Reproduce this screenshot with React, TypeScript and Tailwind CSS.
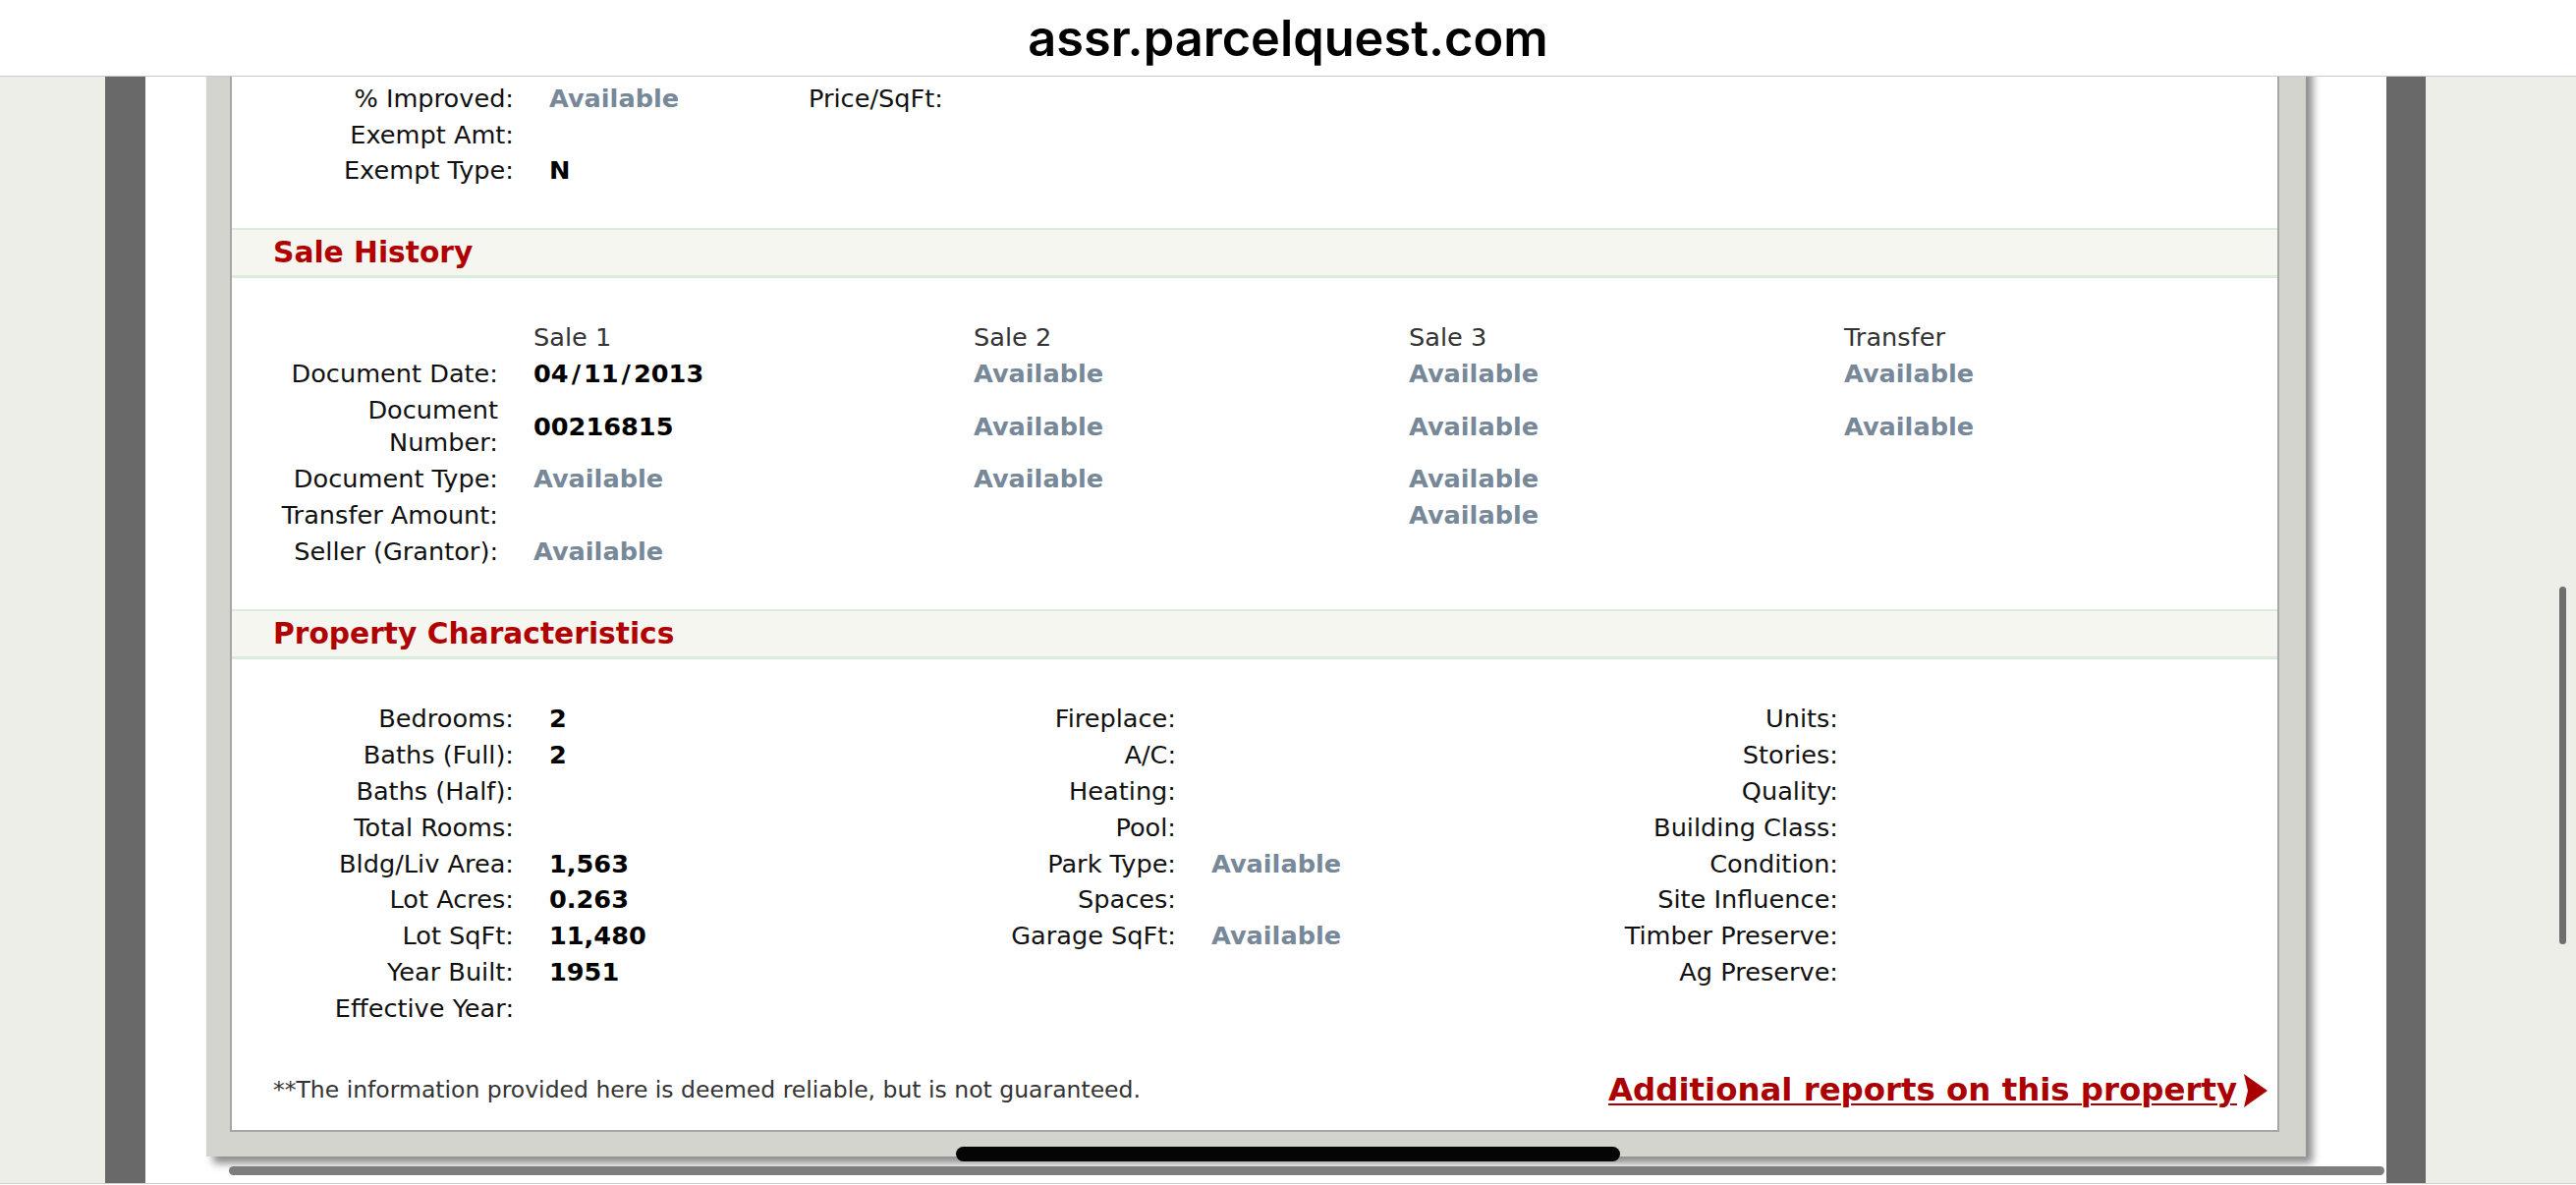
import React from "react";

const FONT = "font-['DejaVu_Sans','Verdana',sans-serif]";

function Avail() {
  return <span className="font-bold text-[#778899]">Available</span>;
}

function Val({ v }: { v?: string }) {
  if (!v) return null;
  if (v === "A") return <Avail />;
  // verdana slashes are much wider than dejavu's
  if (v.includes("/")) {
    const parts = v.split("/");
    return (
      <span className="font-bold text-black">
        {parts.map((p, i) => (
          <React.Fragment key={i}>
            {i > 0 && <span className="px-[3px]">/</span>}
            {p}
          </React.Fragment>
        ))}
      </span>
    );
  }
  return <span className="font-bold text-black">{v}</span>;
}

function Band({ title }: { title: string }) {
  return (
    <div className="flex h-[51px] items-center border-t-2 border-b-[3px] border-[#dcecdc] bg-[#f6f6f0] pl-[42px]">
      <span className="text-[29.7px] font-bold text-[#b00000]">{title}</span>
    </div>
  );
}

const saleRows: { label: string; cells: string[]; tall?: boolean }[] = [
  { label: "Document Date:", cells: ["04/11/2013", "A", "A", "A"] },
  { label: "Document Number:", cells: ["00216815", "A", "A", "A"], tall: true },
  { label: "Document Type:", cells: ["A", "A", "A", ""] },
  { label: "Transfer Amount:", cells: ["", "", "A", ""] },
  { label: "Seller (Grantor):", cells: ["A", "", "", ""] },
];

const saleCols = ["w-[448px]", "w-[443px]", "w-[443px]", "w-[300px]"];

const propCols: [string, string?][][] = [
  [
    ["Bedrooms:", "2"],
    ["Baths (Full):", "2"],
    ["Baths (Half):"],
    ["Total Rooms:"],
    ["Bldg/Liv Area:", "1,563"],
    ["Lot Acres:", "0.263"],
    ["Lot SqFt:", "11,480"],
    ["Year Built:", "1951"],
    ["Effective Year:"],
  ],
  [
    ["Fireplace:"],
    ["A/C:"],
    ["Heating:"],
    ["Pool:"],
    ["Park Type:", "A"],
    ["Spaces:"],
    ["Garage SqFt:", "A"],
  ],
  [
    ["Units:"],
    ["Stories:"],
    ["Quality:"],
    ["Building Class:"],
    ["Condition:"],
    ["Site Influence:"],
    ["Timber Preserve:"],
    ["Ag Preserve:"],
  ],
];

function PropRow({ label, value }: { label: string; value?: string }) {
  return (
    <div className="flex h-[36.8px] items-center">
      <div className="w-[287px] text-right text-[#111]">{label}</div>
      <div className="ml-[36px] w-[351px]">
        <Val v={value} />
      </div>
    </div>
  );
}

export default function App() {
  return (
    <div className="relative h-[1206px] w-[2622px] overflow-hidden bg-white">
      {/* browser address bar */}
      <div className="flex h-[78px] items-center justify-center border-b border-[#cacaca] bg-white">
        <span className="font-['Inter',sans-serif] text-[50.5px] font-semibold text-black">assr.parcelquest.com</span>
      </div>

      <div className="flex h-[1127px] border-b border-[#cfcfcf]">
        <div className="w-[107px] bg-[#eeeee9]" />
        <div className="w-[41px] bg-[#696969]" />

        {/* page area */}
        <div className="w-[2281px] overflow-hidden bg-white">
          <div className="ml-[62px] -mt-[40px] w-[2137px] bg-[#d4d4cf] pl-[24px] pr-[27px] pb-[25px] shadow-[7px_7px_8px_rgba(0,0,0,0.45)]">
            <div className={`border-2 border-[#a6a6a6] bg-white pt-[42px] pb-[20px] text-[25.6px] leading-[33px] ${FONT}`}>
              {/* value summary (tail) */}
              <div className="flex h-[36.8px] items-center">
                <div className="w-[287px] text-right text-[#111]">% Improved:</div>
                <div className="ml-[36px] w-[264px]">
                  <Avail />
                </div>
                <div className="text-[#111]">Price/SqFt:</div>
              </div>
              <PropRow label="Exempt Amt:" />
              <PropRow label="Exempt Type:" value="N" />

              <div className="mt-[39.5px]">
                <Band title="Sale History" />
              </div>

              <div className="mt-[42.6px]">
                <div className="flex h-[36.8px] items-center text-[#333]">
                  <div className="ml-[41px] w-[230px]" />
                  <div className="ml-[36px] flex">
                    {["Sale 1", "Sale 2", "Sale 3", "Transfer"].map((h, i) => (
                      <div key={h} className={saleCols[i]}>
                        {h}
                      </div>
                    ))}
                  </div>
                </div>
                {saleRows.map((r) => (
                  <div key={r.label} className={`flex items-center ${r.tall ? "h-[70px]" : "h-[36.8px]"}`}>
                    <div className="ml-[41px] w-[230px] text-right text-[#111]">{r.label}</div>
                    <div className="ml-[36px] flex">
                      {r.cells.map((c, i) => (
                        <div key={i} className={saleCols[i]}>
                          <Val v={c} />
                        </div>
                      ))}
                    </div>
                  </div>
                ))}
              </div>

              <div className="mt-[40.4px]">
                <Band title="Property Characteristics" />
              </div>

              <div className="mt-[42.6px] grid grid-cols-[674px_674px_674px]">
                {propCols.map((col, ci) => (
                  <div key={ci} className="flex flex-col">
                    {col.map(([l, v]) => (
                      <PropRow key={l} label={l} value={v} />
                    ))}
                  </div>
                ))}
              </div>

              <div className="mt-[45px] flex h-[40px] items-center justify-between pl-[42px] pr-[9px]">
                <span className="text-[23.5px] text-[#333]">**The information provided here is deemed reliable, but is not guaranteed.</span>
                <a className="flex items-center text-[32.4px] font-bold text-[#aa0000] underline decoration-2 underline-offset-[3px]">
                  Additional reports on this property
                  <svg width="26" height="36" viewBox="0 0 26 36" className="ml-[6px]">
                    <polygon points="1,1 25,18 1,35 5,18" fill="#aa0000" />
                  </svg>
                </a>
              </div>
            </div>
          </div>

          {/* horizontal scrollbar */}
          <div className="ml-[85px] mt-[10px] h-[9px] w-[2194px] rounded-full bg-[#7d7d7d]" />
        </div>

        <div className="w-[40px] bg-[#696969]" />
        <div className="w-[153px] bg-[#eeeee9] pl-[136px] pt-[519px]">
          <div className="h-[364px] w-[7px] rounded-full bg-[#6e6e6e]" />
        </div>
      </div>

      {/* home indicator */}
      <div className="absolute left-[973px] top-[1167px] h-[15px] w-[676px] rounded-full bg-[#050505]" />
    </div>
  );
}
